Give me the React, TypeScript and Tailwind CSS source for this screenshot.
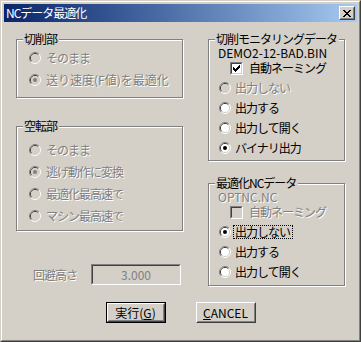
const Radio = ({ checked = false, disabled = false }: { checked?: boolean; disabled?: boolean }) => {
    return (
        <svg width="12" height="12" viewBox="0 0 12 12" className="shrink-0">
            <path d="M2.11 9.89 A5.5 5.5 0 0 1 9.89 2.11" fill="none" stroke="#808080" />
            <path d="M9.89 2.11 A5.5 5.5 0 0 1 2.11 9.89" fill="none" stroke="#ffffff" />
            <path d="M2.82 9.18 A4.5 4.5 0 0 1 9.18 2.82" fill="none" stroke="#404040" />
            <path d="M9.18 2.82 A4.5 4.5 0 0 1 2.82 9.18" fill="none" stroke="#d4d0c8" />
            <circle cx="6" cy="6" r="4" fill={disabled ? "#d4d0c8" : "#ffffff"} />
            {checked && <circle cx="6" cy="6" r="2" fill={disabled ? "#808080" : "#000000"} />}
        </svg>
    );
};

const Check = ({ checked = false, disabled = false }: { checked?: boolean; disabled?: boolean }) => {
    return (
        <div className="w-[13px] h-[13px] shrink-0 border border-t-[#808080] border-l-[#808080] border-r-white border-b-white">
            <div
                className={
                    disabled
                        ? "w-full h-full border border-t-[#404040] border-l-[#404040] border-r-[#d4d0c8] border-b-[#d4d0c8] bg-[#d4d0c8]"
                        : "w-full h-full border border-t-[#404040] border-l-[#404040] border-r-[#d4d0c8] border-b-[#d4d0c8] bg-white flex items-center justify-center"
                }
            >
                {checked && (
                    <svg width="7" height="7" viewBox="0 0 7 7">
                        <path d="M0 2h1v3H0zM1 3h1v3H1zM2 4h1v3H2zM3 3h1v3H3zM4 2h1v3H4zM5 1h1v3H5zM6 0h1v3H6z" fill="#000" />
                    </svg>
                )}
            </div>
        </div>
    );
};

const Group = ({ label, className, children }: { label: string; className: string; children: React.ReactNode }) => {
    return (
        <div className={`relative border border-[#808080] shadow-[1px_1px_0_#fff,inset_1px_1px_0_#fff] ${className}`}>
            <span className="absolute left-[6px] -top-[7px] bg-[#d4d0c8] pl-[1px] pr-[2px] leading-[12px] text-black whitespace-nowrap">
                {label}
            </span>
            {children}
        </div>
    );
};

const grayText = "text-[#808080] [text-shadow:1px_1px_0_#fff] whitespace-nowrap";

const LeftRow = ({ label, checked, disabled, wide }: { label: string; checked?: boolean; disabled?: boolean; wide?: boolean }) => (
    <div className={wide ? "h-[22px] flex items-center gap-[5px] pl-[12px] tracking-normal" : "h-[22px] flex items-center gap-[5px] pl-[12px]"}>
        <Radio checked={checked} disabled={disabled} />
        <span className={disabled ? grayText : "text-black whitespace-nowrap"}>{label}</span>
    </div>
);

const RightRow = ({ label, checked, disabled, focus }: { label: string; checked?: boolean; disabled?: boolean; focus?: boolean }) => (
    <div className="h-[20px] flex items-center gap-[4px] pl-[10px]">
        <Radio checked={checked} disabled={disabled} />
        {focus ? (
            <span className="border border-dotted border-black pl-[1px] pr-[2px] -ml-[2px] leading-[12px] whitespace-nowrap">{label}</span>
        ) : (
            <span className={disabled ? grayText : "text-black whitespace-nowrap"}>{label}</span>
        )}
    </div>
);

const App = () => {
    return (
        <div className="w-[361px] h-[342px] border border-t-[#d4d0c8] border-l-[#d4d0c8] border-r-[#404040] border-b-[#404040] font-['Noto_Sans_CJK_JP',sans-serif] text-[12px] leading-[14px] tracking-[-1px]">
            <div className="w-full h-full border border-t-white border-l-white border-r-[#808080] border-b-[#808080] bg-[#d4d0c8] p-[2px] flex flex-col">
                {/* title bar */}
                <div className="h-[18px] shrink-0 bg-gradient-to-r from-[#0a246a] to-[#a6caf0] flex items-center justify-between pl-[2px] pr-[2px]">
                    <span className="text-white text-[12px] leading-[14px]">NCデータ最適化</span>
                    <div className="w-[16px] h-[14px] border border-t-white border-l-white border-r-[#404040] border-b-[#404040]">
                        <div className="w-full h-full bg-[#d4d0c8] border border-t-[#d4d0c8] border-l-[#d4d0c8] border-r-[#808080] border-b-[#808080] flex items-center justify-center">
                            <svg width="8" height="7" viewBox="0 0 8 7">
                                <path d="M0 0h2v1H0zM6 0h2v1H6zM1 1h2v1H1zM5 1h2v1H5zM2 2h4v1H2zM3 3h2v1H3zM2 4h4v1H2zM1 5h2v1H1zM5 5h2v1H5zM0 6h2v1H0zM6 6h2v1H6z" fill="#000" />
                            </svg>
                        </div>
                    </div>
                </div>

                {/* body */}
                <div className="flex flex-col pt-[17px] pl-[12px]">
                    <div className="flex gap-[25px]">
                        {/* left column */}
                        <div className="w-[167px] flex flex-col">
                            <Group label="切削部" className="h-[59px] pt-[7px]">
                                <LeftRow label="そのまま" disabled />
                                <LeftRow label="送り速度(F値)を最適化" checked disabled wide />
                            </Group>
                            <Group label="空転部" className="h-[105px] mt-[28px] pt-[12px]">
                                <LeftRow label="そのまま" disabled />
                                <LeftRow label="逃げ動作に変換" checked disabled />
                                <LeftRow label="最適化最高速で" disabled />
                                <LeftRow label="マシン最高速で" disabled />
                            </Group>
                            <div className="mt-[33px] h-[21px] flex items-center">
                                <span className={`w-[75px] pl-[17px] ${grayText}`}>回避高さ</span>
                                <div className="w-[90px] h-[21px] border border-t-[#808080] border-l-[#808080] border-r-white border-b-white">
                                    <div className="w-full h-full border border-t-[#404040] border-l-[#404040] border-r-[#d4d0c8] border-b-[#d4d0c8] flex items-center justify-center">
                                        <span className="text-[#808080] tracking-normal">3.000</span>
                                    </div>
                                </div>
                            </div>
                        </div>

                        {/* right column */}
                        <div className="w-[137px] flex flex-col">
                            <Group label="切削モニタリングデータ" className="h-[122px] pt-[7px]">
                                <div className="pl-[9px] h-[13px] leading-[12px] tracking-normal whitespace-nowrap">DEMO2-12-BAD.BIN</div>
                                <div className="h-[16px] flex items-center gap-[6px] pl-[21px]">
                                    <Check checked />
                                    <span className="whitespace-nowrap leading-[12px]">自動ネーミング</span>
                                </div>
                                <div className="mt-[2px]">
                                    <RightRow label="出力しない" disabled />
                                    <RightRow label="出力する" />
                                    <RightRow label="出力して開く" />
                                    <RightRow label="バイナリ出力" checked />
                                </div>
                            </Group>
                            <Group label="最適化NCデータ" className="h-[103px] mt-[22px] pt-[7px]">
                                <div className={`pl-[9px] h-[13px] leading-[12px] tracking-normal ${grayText}`}>OPTNC.NC</div>
                                <div className="h-[16px] flex items-center gap-[6px] pl-[21px]">
                                    <Check disabled />
                                    <span className={`leading-[12px] ${grayText}`}>自動ネーミング</span>
                                </div>
                                <div className="mt-[2px]">
                                    <RightRow label="出力しない" checked focus />
                                    <RightRow label="出力する" />
                                    <RightRow label="出力して開く" />
                                </div>
                            </Group>
                        </div>
                    </div>

                    {/* buttons */}
                    <div className="mt-[16px] -ml-[12px] flex justify-center gap-[30px]">
                        <div className="w-[60px] h-[21px] border border-black">
                            <div className="w-full h-full border border-t-white border-l-white border-r-[#404040] border-b-[#404040]">
                                <div className="w-full h-full border border-t-[#d4d0c8] border-l-[#d4d0c8] border-r-[#808080] border-b-[#808080] flex items-center justify-center">
                                    <span className="tracking-normal">実行(<u>G</u>)</span>
                                </div>
                            </div>
                        </div>
                        <div className="w-[60px] h-[21px] border border-t-white border-l-white border-r-[#404040] border-b-[#404040]">
                            <div className="w-full h-full border border-t-[#d4d0c8] border-l-[#d4d0c8] border-r-[#808080] border-b-[#808080] flex items-center justify-center">
                                <span className="tracking-normal"><u>C</u>ANCEL</span>
                            </div>
                        </div>
                    </div>
                </div>
            </div>
        </div>
    );
};

export default App;
